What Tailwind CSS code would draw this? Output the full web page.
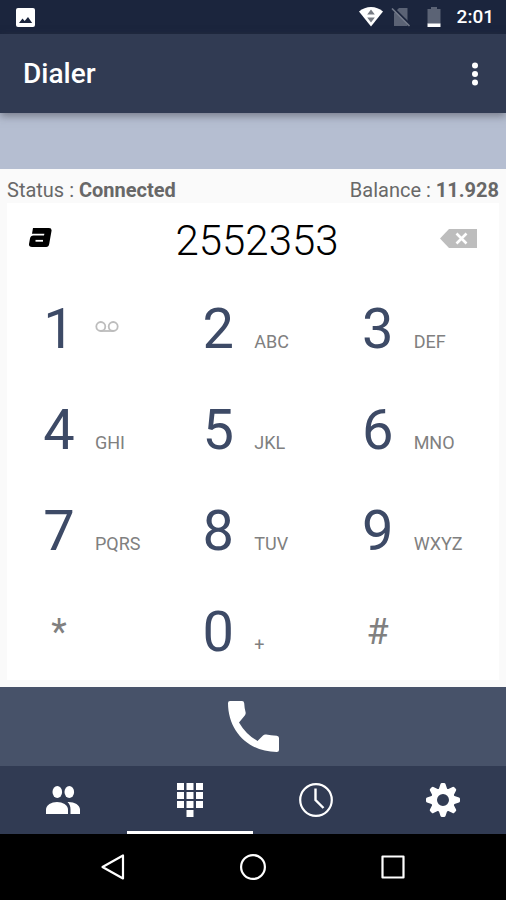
<!DOCTYPE html>
<html lang="en">
<head>
    <meta charset="UTF-8">
    <meta name="viewport" content="width=device-width, initial-scale=1.0">
    <title>Dialer</title>
    <script src="https://cdn.jsdelivr.net/npm/@tailwindcss/browser@4"></script>
</head>
<body class="min-h-screen flex flex-col bg-[#fafafa] font-['Roboto',sans-serif]">
    <!-- Status bar -->
    <div class="h-[34px] shrink-0 bg-[#1b253d] flex items-center justify-between pl-4 pr-3 text-white">
        <svg class="w-[19px] h-[19px]" viewBox="0 0 19 19" aria-hidden="true">
            <rect width="19" height="19" rx="2" fill="#fff"/>
            <path d="M3 15l3.500-4.500 2.200 2.600L12 9l4.200 6z" fill="#1b253d"/>
        </svg>
        <div class="flex items-center">
            <svg class="w-6 h-5 mr-2" viewBox="0 0 24 20" aria-hidden="true">
                <path d="M0 4.500C3.500 1.600 7.500 0 12 0s8.500 1.600 12 4.500L12 19.500z" fill="#fff"/>
                <path d="M12 2.500l3.800 5H8.200zM12 15.500l-3.800-5h7.600z" fill="#777b83"/>
            </svg>
            <svg class="w-5 h-5 mr-4" viewBox="0 0 20 20" aria-hidden="true">
                <path d="M8 1h8.500v18H3V6z" fill="#5b6375"/>
                <path d="M1.500 0l18 18" stroke="#1b253d" stroke-width="2"/>
                <path d="M1 1.500L18.500 19" stroke="#747b8a" stroke-width="1.600"/>
            </svg>
            <svg class="w-[14px] h-5 mr-4" viewBox="0 0 14 20" aria-hidden="true">
                <path d="M4 0h6v2h3.500v15H.5V2H4z" fill="#5b6375"/>
                <path d="M.5 16.500h13V20H.5z" fill="#fff"/>
            </svg>
            <span class="text-[19px] leading-5 font-medium">2:01</span>
        </div>
    </div>

    <!-- App bar -->
    <header class="relative h-[79px] shrink-0 bg-[#313b53] flex items-center justify-between pl-[23px] pr-[15px] shadow-[0_3px_8px_rgba(60,60,70,0.5)]">
        <h1 class="text-[28px] leading-8 font-medium text-white">Dialer</h1>
        <button type="button" aria-label="More options" class="w-8 h-10 flex items-center justify-center">
            <svg class="w-2 h-6" viewBox="0 0 8 24" fill="#fff" aria-hidden="true">
                <circle cx="4" cy="3.500" r="3"/>
                <circle cx="4" cy="12" r="3"/>
                <circle cx="4" cy="20.500" r="3"/>
            </svg>
        </button>
    </header>
    <div class="h-14 shrink-0 bg-[#b5bed1]"></div>

    <main class="flex-1 flex flex-col px-[7px] pb-[7px]">
        <div class="h-[34px] flex items-center justify-between pt-2 text-xl leading-6 text-[#686868]">
            <p>Status : <strong class="font-bold">Connected</strong></p>
            <p>Balance : <strong class="font-bold">11.928</strong></p>
        </div>

        <section class="flex-1 flex flex-col bg-white">
            <!-- Number field -->
            <div class="h-[74px] pb-1 flex items-center">
                <button type="button" aria-label="Account" class="w-20 h-12 pl-[22px] flex items-center">
                    <svg class="w-[23px] h-5" viewBox="0 0 23 20" aria-hidden="true">
                        <path d="M4 0H20q3 0 2.500 3l-2.300 13q-.5 3-3 3H3q-3.500 0-3-3l1-5.500Q1.500 7.500 4.500 7.500H15L15.400 5.800H3z" fill="#000"/>
                        <path d="M6.500 12.800H14" fill="none" stroke="#fff" stroke-width="1.800"/>
                    </svg>
                </button>
                <input type="tel" value="2552353" aria-label="Phone number" class="flex-1 min-w-0 h-14 pt-1 text-center text-[42px] leading-[52px] font-light text-black bg-transparent outline-none">
                <button type="button" aria-label="Delete digit" class="w-[72px] h-12 pr-[22px] flex items-center justify-end">
                    <svg class="w-[37px] h-[19px]" viewBox="0 0 37 19" aria-hidden="true">
                        <path d="M9 0h28v19H9L0 9.500z" fill="#bdbdbd"/>
                        <path d="M16.500 4.500l10 10m0-10l-10 10" stroke="#fff" stroke-width="2.600"/>
                    </svg>
                </button>
            </div>

            <!-- Keypad -->
            <div class="flex-1 grid grid-cols-3 grid-rows-4 pl-2 pr-[6px] text-[#3d4a66]">
                <button type="button" class="flex items-center pt-1 pl-5 gap-3">
                    <span class="w-12 text-center text-[56px] leading-[64px]">1</span>
                    <svg class="w-6 h-3 mb-1" viewBox="0 0 24 12" fill="none" stroke="#bdbdbd" stroke-width="1.800" role="img" aria-label="Voicemail">
                        <circle cx="5.800" cy="5.500" r="4.500"/>
                        <circle cx="18.200" cy="5.500" r="4.500"/>
                        <path d="M5.800 10h12.400"/>
                    </svg>
                </button>
                <button type="button" class="flex items-center pt-1 pl-5">
                    <span class="flex items-baseline gap-3">
                        <span class="w-12 text-center text-[56px] leading-[64px]">2</span>
                        <span class="text-lg text-[#808080]">ABC</span>
                    </span>
                </button>
                <button type="button" class="flex items-center pt-1 pl-5">
                    <span class="flex items-baseline gap-3">
                        <span class="w-12 text-center text-[56px] leading-[64px]">3</span>
                        <span class="text-lg text-[#808080]">DEF</span>
                    </span>
                </button>
                <button type="button" class="flex items-center pt-1 pl-5">
                    <span class="flex items-baseline gap-3">
                        <span class="w-12 text-center text-[56px] leading-[64px]">4</span>
                        <span class="text-lg text-[#808080]">GHI</span>
                    </span>
                </button>
                <button type="button" class="flex items-center pt-1 pl-5">
                    <span class="flex items-baseline gap-3">
                        <span class="w-12 text-center text-[56px] leading-[64px]">5</span>
                        <span class="text-lg text-[#808080]">JKL</span>
                    </span>
                </button>
                <button type="button" class="flex items-center pt-1 pl-5">
                    <span class="flex items-baseline gap-3">
                        <span class="w-12 text-center text-[56px] leading-[64px]">6</span>
                        <span class="text-lg text-[#808080]">MNO</span>
                    </span>
                </button>
                <button type="button" class="flex items-center pt-1 pl-5">
                    <span class="flex items-baseline gap-3">
                        <span class="w-12 text-center text-[56px] leading-[64px]">7</span>
                        <span class="text-lg text-[#808080]">PQRS</span>
                    </span>
                </button>
                <button type="button" class="flex items-center pt-1 pl-5">
                    <span class="flex items-baseline gap-3">
                        <span class="w-12 text-center text-[56px] leading-[64px]">8</span>
                        <span class="text-lg text-[#808080]">TUV</span>
                    </span>
                </button>
                <button type="button" class="flex items-center pt-1 pl-5">
                    <span class="flex items-baseline gap-3">
                        <span class="w-12 text-center text-[56px] leading-[64px]">9</span>
                        <span class="text-lg text-[#808080]">WXYZ</span>
                    </span>
                </button>
                <button type="button" class="flex items-center pt-1 pl-5">
                    <span class="w-12 text-center text-4xl text-[#808080]">*</span>
                </button>
                <button type="button" class="flex items-center pt-1 pl-5">
                    <span class="flex items-baseline gap-3">
                        <span class="w-12 text-center text-[56px] leading-[64px]">0</span>
                        <span class="text-lg text-[#808080]">+</span>
                    </span>
                </button>
                <button type="button" class="flex items-center pt-1 pl-5">
                    <span class="w-12 text-center text-4xl text-[#808080]">#</span>
                </button>
            </div>
        </section>
    </main>

    <!-- Call button -->
    <button type="button" aria-label="Call" class="h-[79px] shrink-0 bg-[#475269] flex items-center justify-center">
        <svg class="w-[51px] h-[51px]" viewBox="0 0 51 51" fill="#fff" aria-hidden="true">
            <path d="M2 0H14q2 0 2.200 2.200.2 4.500 1.400 9 .4 1.900-.8 3.200L11 21.500Q18 33.500 29.500 40l5.500-5.500q1.400-1.300 3.200-.9 4.500 1 10.600 1.200 2.200.2 2.200 2.200V49q0 2-2.200 2C20.500 51 0 30 0 2Q0 0 2 0z"/>
        </svg>
    </button>

    <!-- Tabs -->
    <nav class="h-[68px] shrink-0 bg-[#313b53] grid grid-cols-4">
        <a href="#contacts" aria-label="Contacts" class="flex items-center justify-center border-y-3 border-transparent">
            <svg class="w-[34px] h-7" viewBox="0 0 34 28" fill="#fff" aria-hidden="true">
                <ellipse cx="11.300" cy="6" rx="4.800" ry="6"/>
                <ellipse cx="23.300" cy="6" rx="4.800" ry="6"/>
                <path d="M0 28v-4.500C0 19 5.500 16 11 16s11 3 11 7.500V28z"/>
                <path d="M22.500 16C28.500 16 34 19 34 23.500V28h-9.500v-4.500c0-3.200-1-5.500-3-7.400z"/>
            </svg>
        </a>
        <a href="#dialer" aria-label="Dialer" aria-current="page" class="flex items-center justify-center border-y-3 border-t-transparent border-b-white">
            <svg class="w-[26px] h-[34px]" viewBox="0 0 26 34" fill="#fff" aria-hidden="true">
                <path d="M0 0h7v7H0zM9.500 0h7v7h-7zM19 0h7v7h-7zM0 9h7v7H0zM9.500 9h7v7h-7zM19 9h7v7h-7zM0 18h7v7H0zM9.500 18h7v7h-7zM19 18h7v7h-7zM9.500 27h7v7h-7z"/>
            </svg>
        </a>
        <a href="#recent" aria-label="Recent calls" class="flex items-center justify-center border-y-3 border-transparent">
            <svg class="w-[34px] h-[34px]" viewBox="0 0 34 34" fill="none" stroke="#fff" aria-hidden="true">
                <circle cx="17" cy="17" r="15.800" stroke-width="2.200"/>
                <path d="M16.500 5.500V17l8 8" stroke-width="2.400"/>
            </svg>
        </a>
        <a href="#settings" aria-label="Settings" class="flex items-center justify-center border-y-3 border-transparent">
            <svg class="w-[34px] h-[34px]" viewBox="-17 -17 34 34" fill="#fff" aria-hidden="true">
                <circle r="9" fill="none" stroke="#fff" stroke-width="6"/>
                <path id="tooth" d="M-4.500-10L-2.500-16q.3-1 1.500-1h2q1.200 0 1.500 1l2 6z"/>
                <use href="#tooth" transform="rotate(45)"/>
                <use href="#tooth" transform="rotate(90)"/>
                <use href="#tooth" transform="rotate(135)"/>
                <use href="#tooth" transform="rotate(180)"/>
                <use href="#tooth" transform="rotate(225)"/>
                <use href="#tooth" transform="rotate(270)"/>
                <use href="#tooth" transform="rotate(315)"/>
            </svg>
        </a>
    </nav>

    <!-- System navigation -->
    <div class="h-[66px] shrink-0 bg-black flex items-center justify-center gap-[114px]">
        <button type="button" aria-label="Back" class="flex">
            <svg class="w-[26px] h-7" viewBox="0 0 26 28" fill="none" stroke="#fff" stroke-width="2.200" stroke-linejoin="round" aria-hidden="true">
                <path d="M23 2.500v23L2.500 14z"/>
            </svg>
        </button>
        <button type="button" aria-label="Home" class="flex">
            <svg class="w-[26px] h-7" viewBox="0 0 26 28" fill="none" stroke="#fff" stroke-width="2.200" aria-hidden="true">
                <circle cx="13" cy="14" r="11.900"/>
            </svg>
        </button>
        <button type="button" aria-label="Overview" class="flex">
            <svg class="w-[26px] h-7" viewBox="0 0 26 28" fill="none" stroke="#fff" stroke-width="2.200" stroke-linejoin="round" aria-hidden="true">
                <rect x="2.500" y="3.500" width="21" height="21"/>
            </svg>
        </button>
    </div>
</body>
</html>
